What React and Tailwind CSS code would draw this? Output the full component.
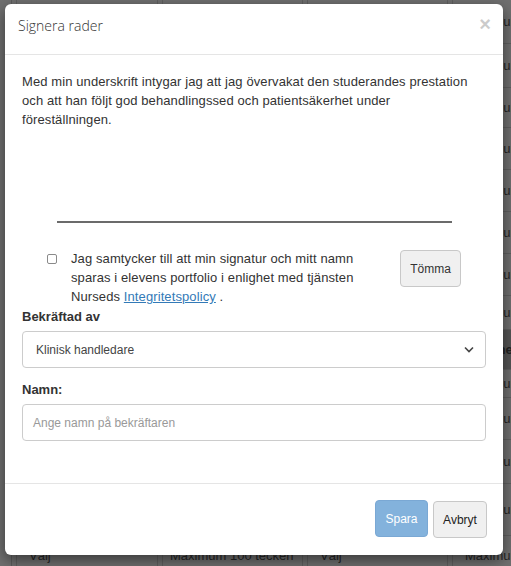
import React from 'react';

const rowHeights = [44, 44, 40, 42, 42, 42, 42, 34, 40, 28, 42, 44, 52, 40];

const BackgroundTable = () => (
  <div className="flex flex-col">
    {rowHeights.map((h, i) => {
      const header = i === 8;
      const cell = `shrink-0 flex items-center border-b border-x border-[#606060] text-[13px] whitespace-nowrap overflow-hidden ${
        header ? 'bg-[#555] font-bold text-[#222]' : 'text-[#262626]'
      }`;
      return (
        <div key={i} className="flex gap-[4px] pl-[11px]" style={{ height: h }}>
          <div className="w-0 shrink-0 border-l border-[#5c5c5c]" />
          <div className={`w-[142px] pl-[12px] ${cell}`}>{header ? 'Status' : 'Välj'}</div>
          <div className={`w-[141px] pl-[7px] ${cell}`}>{header ? 'Kommentar' : 'Maximum 100 tecken'}</div>
          <div className={`w-[141px] pl-[12px] ${cell}`}>{header ? 'Status' : 'Välj'}</div>
          <div className={`w-[141px] pl-[12px] ${cell}`}>{header ? 'Kommentar' : 'Maximum 100 tecken'}</div>
        </div>
      );
    })}
  </div>
);

export default function App() {
  return (
    <div
      className="relative w-[511px] h-[566px] overflow-hidden bg-[#707070]"
      style={{ fontFamily: '"Liberation Sans", Arial, sans-serif' }}
    >
      <BackgroundTable />

      <div className="absolute left-[5px] top-[4px] w-[498px] h-[551px] bg-white rounded-[6px] shadow-[0_5px_15px_rgba(0,0,0,0.5)] flex flex-col text-[#333]">
        {/* header */}
        <div className="h-[51px] shrink-0 border-b border-[#e5e5e5] flex items-start justify-between pl-[13px] pr-[12px] pt-[11px]">
          <h4
            className="text-[14px] leading-[22px] font-light text-[#333]"
            style={{ fontFamily: '"Open Sans", "Noto Sans", sans-serif' }}
          >
            Signera rader
          </h4>
          <button className="text-[20px] leading-[16px] font-bold text-black opacity-20 mt-[1px]">×</button>
        </div>

        {/* body */}
        <div className="flex-1 px-[17px] pt-[17px]">
          <p className="text-[13px] tracking-[0.1px] leading-[19px] pr-[12px]">
            Med min underskrift intygar jag att jag övervakat den studerandes prestation och att han följt god
            behandlingssed och patientsäkerhet under föreställningen.
          </p>

          <div className="h-[92px]" />
          <div className="mx-auto w-[395px] h-[2px] bg-[#6b6b6b]" />

          <div className="flex mt-[26px]">
            <div className="flex w-[372px] pl-[25px]">
              <div className="w-[10px] h-[10px] mt-[5px] border border-[#8a8a8a] rounded-[2px] shrink-0" />
              <p className="ml-[14px] w-[292px] text-[13px] tracking-[0.1px] leading-[19px]">
                Jag samtycker till att min signatur och mitt namn sparas i elevens portfolio i enlighet med tjänsten
                Nurseds{' '}
                <a className="text-[#337ab7] underline" href="#">
                  Integritetspolicy
                </a>{' '}
                .
              </p>
            </div>
            <button className="ml-[6px] mt-[1px] w-[61px] h-[37px] bg-[#f0f0f0] border border-[#c8c8c8] rounded-[4px] text-[12px] text-[#333]">
              Tömma
            </button>
          </div>

          <label className="block font-bold text-[13px] leading-[20px] mt-[1px]">Bekräftad av</label>
          <div className="mt-[4px] h-[37px] border border-[#ccc] rounded-[4px] flex items-center justify-between pl-[13px] pr-[11px]">
            <span className="text-[12px] text-[#444]">Klinisk handledare</span>
            <svg width="10" height="7" viewBox="0 0 10 7" fill="none">
              <path d="M1 1.5 L5 5.5 L9 1.5" stroke="#444" strokeWidth="1.6" />
            </svg>
          </div>

          <label className="block font-bold text-[13px] leading-[20px] mt-[12px]">Namn:</label>
          <div className="mt-[4px] h-[37px] border border-[#ccc] rounded-[4px] flex items-center pl-[10px]">
            <span className="text-[12px] text-[#999]">Ange namn på bekräftaren</span>
          </div>
        </div>

        {/* footer */}
        <div className="h-[72px] shrink-0 border-t border-[#e5e5e5] flex items-start justify-end gap-[5px] pr-[16px] pt-[16px]">
          <button className="w-[53px] h-[37px] rounded-[4px] bg-[#83b2dc] border border-[#7aa8d4] text-white text-[12px]">
            Spara
          </button>
          <button className="w-[54px] h-[37px] rounded-[4px] bg-[#f0f0f0] border border-[#c8c8c8] text-[#222] text-[12px] mt-[1px]">
            Avbryt
          </button>
        </div>
      </div>
    </div>
  );
}
